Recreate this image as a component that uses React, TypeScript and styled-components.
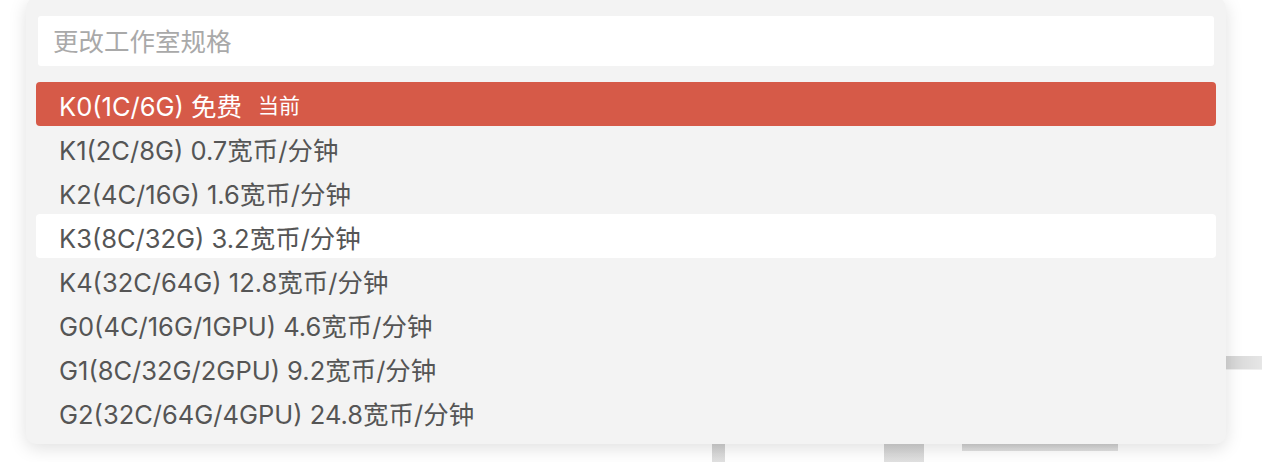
import { useState } from 'react'
import styled, { createGlobalStyle } from 'styled-components'

const GlobalStyle = createGlobalStyle`
  html, body {
    margin: 0;
    padding: 0;
    background: #fff;
  }
  body {
    font-family: Inter, 'Noto Sans CJK SC', sans-serif;
  }
`

const Page = styled.div`
  position: relative;
  width: 1262px;
  height: 462px;
  overflow: hidden;
`

// the page content peeking out from under the dropdown
const Backdrop = styled.div`
  padding-top: 356px;
`

const SideRule = styled.div`
  width: 36px;
  height: 13px;
  margin-left: auto;
  background: linear-gradient(90deg, #d4d4d4, #e6e6e6);
  border-bottom: 1px solid #efefef;
`

const BottomRow = styled.div`
  display: flex;
  align-items: flex-start;
  margin-top: 74px;
  padding-left: 712px;
`

const Stub = styled.div<{ $w: number; $h: number; $gap: number }>`
  width: ${(p) => p.$w}px;
  height: ${(p) => p.$h}px;
  margin-right: ${(p) => p.$gap}px;
  background: linear-gradient(180deg, #cfcfcf, #e2e2e2);
`

const Dropdown = styled.div`
  position: absolute;
  top: -2px;
  left: 26px;
  width: 1200px;
  box-sizing: border-box;
  padding: 18px 10px 10px;
  background: #f3f3f3;
  border-radius: 10px;
  box-shadow: 0 4px 18px rgba(0, 0, 0, 0.13);
`

const Search = styled.input`
  display: block;
  box-sizing: border-box;
  width: calc(100% - 4px);
  height: 50px;
  margin: 0 2px 16px;
  padding: 0 15px;
  border: none;
  border-radius: 3px;
  outline: none;
  background: #fff;
  font-family: inherit;
  font-size: 25.5px;
  color: #555;

  &::placeholder {
    color: #a9a9a9;
  }
`

const List = styled.ul`
  list-style: none;
  margin: 0;
  padding: 0;
`

const Option = styled.li<{ $active?: boolean; $hover?: boolean }>`
  display: flex;
  align-items: center;
  height: 44px;
  padding: 0 23px;
  border-radius: 4px;
  font-size: 25.5px;
  white-space: pre;
  cursor: pointer;
  color: ${(p) => (p.$active ? '#fff' : '#555')};
  background: ${(p) => (p.$active ? '#d65a48' : p.$hover ? '#fff' : 'transparent')};
`

const Tag = styled.span`
  margin-left: 16px;
  font-size: 21px;
`

const specs = [
  { name: 'K0(1C/6G)', price: '免费' },
  { name: 'K1(2C/8G)', price: '0.7宽币/分钟' },
  { name: 'K2(4C/16G)', price: '1.6宽币/分钟' },
  { name: 'K3(8C/32G)', price: '3.2宽币/分钟' },
  { name: 'K4(32C/64G)', price: '12.8宽币/分钟' },
  { name: 'G0(4C/16G/1GPU)', price: '4.6宽币/分钟' },
  { name: 'G1(8C/32G/2GPU)', price: '9.2宽币/分钟' },
  { name: 'G2(32C/64G/4GPU)', price: '24.8宽币/分钟' },
]

export default function App() {
  const current = 'K0(1C/6G)'
  const [hovered, setHovered] = useState('K3(8C/32G)')

  return (
    <>
      <GlobalStyle />
      <Page>
        <Backdrop>
          <SideRule />
          <BottomRow>
            <Stub $w={13} $h={19} $gap={159} />
            <Stub $w={40} $h={19} $gap={38} />
            <Stub $w={156} $h={7} $gap={0} />
          </BottomRow>
        </Backdrop>

        <Dropdown>
          <Search placeholder='更改工作室规格' />
          <List>
            {specs.map(({ name, price }) => (
              <Option
                key={name}
                $active={name === current}
                $hover={name === hovered}
                onMouseEnter={() => setHovered(name)}
              >
                {`${name} ${price}`}
                {name === current && <Tag>当前</Tag>}
              </Option>
            ))}
          </List>
        </Dropdown>
      </Page>
    </>
  )
}
